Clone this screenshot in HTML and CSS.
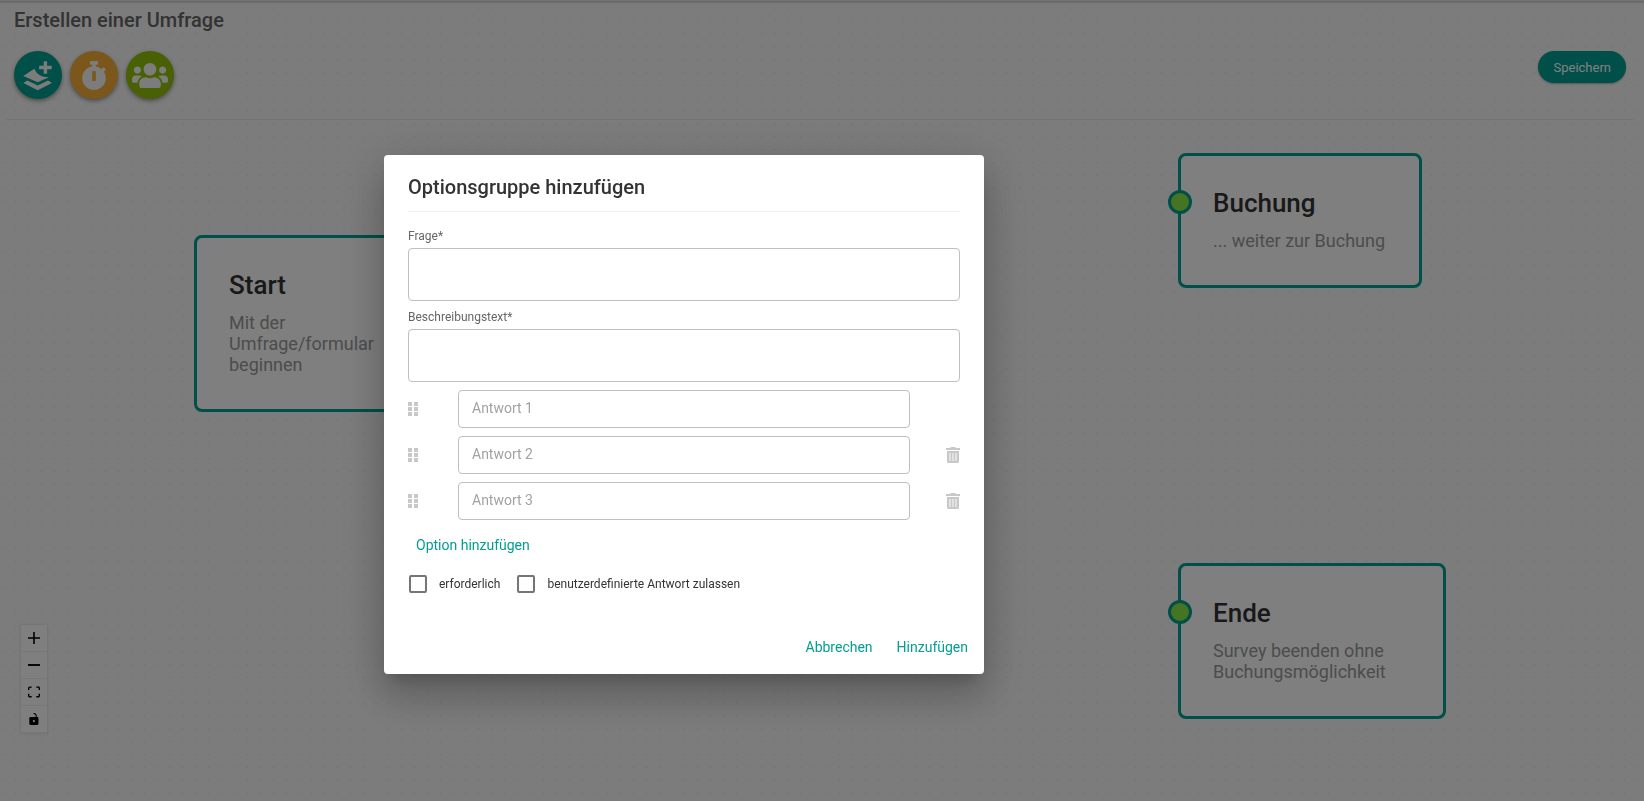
FILE: index.html
```html
<!DOCTYPE html>
<html lang="de">
<head>
<meta charset="utf-8">
<title>Erstellen einer Umfrage</title>
<link rel="stylesheet" href="styles.css">
</head>
<body>
<div class="page">
  <svg class="grid" aria-hidden="true">
    <defs>
      <pattern id="dots" x="9.3" y="0.7" width="12.87" height="12.87" patternUnits="userSpaceOnUse">
        <circle cx="6.4" cy="6.4" r="0.7" fill="#e2e2e2"/>
      </pattern>
    </defs>
    <rect width="100%" height="100%" fill="url(#dots)"/>
  </svg>

  <header class="header">
    <h1 class="header-title">Erstellen einer Umfrage</h1>
    <div class="toolbar">
      <div class="tools">
        <button class="tool tool-teal" type="button" aria-label="Optionsgruppe">
          <svg width="32" height="32" viewBox="0 0 32 32" fill="currentColor">
            <path d="M21.700 2.300h3.400v4.500h4.600v3.400h-4.600v4.600h-3.400v-4.600h-4.600V6.800h4.600z"/>
            <path d="M1.300 17L12.300 9.700C15 15.500 19 18 27 18.200L15.700 23.200z"/>
            <path d="M1.300 24L5.300 21.600L15.700 26.400L26 21.600L30 24L15.700 31.200z"/>
          </svg>
        </button>
        <button class="tool tool-orange" type="button" aria-label="Zeit">
          <svg width="26" height="29" viewBox="0 0 448 512" fill="currentColor"><path d="M432 304c0 114.900-93.100 208-208 208S16 418.900 16 304c0-104 76.300-190.200 176-205.500V64h-28c-6.600 0-12-5.400-12-12V12c0-6.600 5.400-12 12-12h120c6.600 0 12 5.400 12 12v40c0 6.600-5.400 12-12 12h-28v34.500c37.500 5.800 71.700 21.600 99.700 44.600l27.500-27.500c4.700-4.700 12.300-4.700 17 0l28.300 28.300c4.700 4.700 4.700 12.300 0 17l-30 30C419.700 223.300 432 262.200 432 304zm-176 36V188.500c0-6.600-5.400-12-12-12h-40c-6.600 0-12 5.400-12 12V340c0 6.600 5.400 12 12 12h40c6.600 0 12-5.400 12-12z"/></svg>
        </button>
        <button class="tool tool-green" type="button" aria-label="Personen">
          <svg width="36" height="29" viewBox="0 0 640 512" fill="currentColor"><path d="M96 224c35.300 0 64-28.700 64-64s-28.700-64-64-64-64 28.700-64 64 28.700 64 64 64zm448 0c35.300 0 64-28.700 64-64s-28.700-64-64-64-64 28.700-64 64 28.700 64 64 64zm32 32h-64c-17.600 0-33.500 7.100-45.100 18.600 40.300 22.100 68.900 62 75.100 109.400h66c17.700 0 32-14.300 32-32v-32c0-35.300-28.700-64-64-64zm-256 0c61.900 0 112-50.100 112-112S381.900 32 320 32 208 82.100 208 144s50.100 112 112 112zm76.800 32h-8.300c-20.800 10-43.900 16-68.500 16s-47.600-6-68.500-16h-8.300C179.600 288 128 339.600 128 403.200V432c0 26.500 21.500 48 48 48h288c26.500 0 48-21.500 48-48v-28.800c0-63.600-51.600-115.200-115.200-115.200zm-223.700-13.400C161.500 263.100 145.600 256 128 256H64c-35.300 0-64 28.700-64 64v32c0 17.700 14.300 32 32 32h65.900c6.300-47.400 34.900-87.300 75.200-109.400z"/></svg>
        </button>
      </div>
      <button class="save" type="button">Speichern</button>
    </div>
  </header>

  <main class="canvas">
    <article class="node node-start">
      <h2 class="node-title">Start</h2>
      <p class="node-text">Mit der Umfrage/formular beginnen</p>
    </article>
    <article class="node node-booking">
      <span class="handle"></span>
      <h2 class="node-title">Buchung</h2>
      <p class="node-text">... weiter zur Buchung</p>
    </article>
    <article class="node node-end">
      <span class="handle"></span>
      <h2 class="node-title">Ende</h2>
      <p class="node-text">Survey beenden ohne Buchungsmöglichkeit</p>
    </article>
    <div class="controls">
      <button class="control" type="button" aria-label="Vergrößern"><svg width="12" height="12" viewBox="0 0 32 32"><path d="M32 18.133H18.133V32h-4.266V18.133H0v-4.266h13.867V0h4.266v13.867H32z"/></svg></button>
      <button class="control" type="button" aria-label="Verkleinern"><svg width="12" height="12" viewBox="0 0 32 32"><path d="M0 13.500h32v5H0z"/></svg></button>
      <button class="control" type="button" aria-label="Einpassen"><svg width="12" height="12" viewBox="0 0 32 30"><path d="M3.692 4.630c0-.530.400-.938.939-.938h5.215V0H4.708C2.130 0 0 2.054 0 4.630v5.216h3.692V4.631zM27.354 0h-5.200v3.692h5.170c.530 0 .984.400.984.939v5.215H32V4.631A4.624 4.624 0 0027.354 0zm.954 24.830c0 .532-.400.940-.939.940h-5.215v3.768h5.215c2.577 0 4.631-2.130 4.631-4.707v-5.139h-3.692v5.139zm-23.677.940c-.531 0-.939-.400-.939-.940v-5.138H0v5.139c0 2.577 2.130 4.707 4.708 4.707h5.138V25.770H4.631z"/></svg></button>
      <button class="control" type="button" aria-label="Sperren"><svg width="10" height="12" viewBox="0 0 25 32"><path d="M21.333 10.667H19.810V7.619C19.810 3.429 16.380 0 12.190 0c-4.114 1.828-1.370 2.133.305 2.438 1.676.305 4.420 2.590 4.420 5.181v3.048H3.047A3.056 3.056 0 000 13.714v15.238A3.056 3.056 0 003.048 32h18.285a3.056 3.056 0 003.048-3.048V13.714a3.056 3.056 0 00-3.048-3.047zM12.190 24.533a3.056 3.056 0 01-3.047-3.047 3.056 3.056 0 013.047-3.048 3.056 3.056 0 013.048 3.048 3.056 3.056 0 01-3.048 3.047z"/></svg></button>
    </div>
  </main>
</div>

<div class="backdrop">
  <form class="dialog" role="dialog" aria-labelledby="dialog-title">
    <h2 class="dialog-title" id="dialog-title">Optionsgruppe hinzufügen</h2>
    <div class="field">
      <label class="field-label" for="question">Frage*</label>
      <textarea class="box area" id="question"></textarea>
    </div>
    <div class="field">
      <label class="field-label" for="description">Beschreibungstext*</label>
      <textarea class="box area" id="description"></textarea>
    </div>
    <div class="answers">
      <div class="answer">
        <svg class="grip" width="10" height="14" viewBox="0 0 10 14"><path d="M0 0h4v4H0zM6 0h4v4H6zM0 5h4v4H0zM6 5h4v4H6zM0 10h4v4H0zM6 10h4v4H6z"/></svg>
        <input class="box" type="text" placeholder="Antwort 1" aria-label="Antwort 1">
      </div>
      <div class="answer">
        <svg class="grip" width="10" height="14" viewBox="0 0 10 14"><path d="M0 0h4v4H0zM6 0h4v4H6zM0 5h4v4H0zM6 5h4v4H6zM0 10h4v4H0zM6 10h4v4H6z"/></svg>
        <input class="box" type="text" placeholder="Antwort 2" aria-label="Antwort 2">
        <button class="remove" type="button" aria-label="Antwort 2 löschen"><svg width="14" height="16" viewBox="0 0 14 16"><path fill="#c8c8c8" d="M0 1h4l1-1h4l1 1h4v2H0zM1 4h12v11l-1 1H2l-1-1z"/><path fill="#e2e2e2" d="M3 6h2v8H3zM6 6h2v8H6zM9 6h2v8H9z"/></svg></button>
      </div>
      <div class="answer">
        <svg class="grip" width="10" height="14" viewBox="0 0 10 14"><path d="M0 0h4v4H0zM6 0h4v4H6zM0 5h4v4H0zM6 5h4v4H6zM0 10h4v4H0zM6 10h4v4H6z"/></svg>
        <input class="box" type="text" placeholder="Antwort 3" aria-label="Antwort 3">
        <button class="remove" type="button" aria-label="Antwort 3 löschen"><svg width="14" height="16" viewBox="0 0 14 16"><path fill="#c8c8c8" d="M0 1h4l1-1h4l1 1h4v2H0zM1 4h12v11l-1 1H2l-1-1z"/><path fill="#e2e2e2" d="M3 6h2v8H3zM6 6h2v8H6zM9 6h2v8H9z"/></svg></button>
      </div>
    </div>
    <button class="link add" type="button">Option hinzufügen</button>
    <div class="checks">
      <label class="check"><input class="tick" type="checkbox">erforderlich</label>
      <label class="check"><input class="tick" type="checkbox">benutzerdefinierte Antwort zulassen</label>
    </div>
    <div class="actions">
      <button class="link" type="button">Abbrechen</button>
      <button class="link" type="submit">Hinzufügen</button>
    </div>
  </form>
</div>
</body>
</html>
```
FILE: styles.css
```css
* {
  box-sizing: border-box;
}

body {
  margin: 0;
  font-family: Roboto, "Liberation Sans", sans-serif;
  color: #333;
}

h1, h2, p {
  margin: 0;
}

button, input, textarea {
  font: inherit;
}

button {
  border: 0;
  padding: 0;
  background: none;
  cursor: pointer;
}

svg {
  display: block;
}

.page {
  position: relative;
  display: flex;
  flex-direction: column;
  min-height: 100vh;
  overflow: hidden;
  background: linear-gradient(#c8c8c8, #f8f8f8 3px);
  border-top: 1px solid #e8e8e8;
}

.grid {
  position: absolute;
  inset: 0;
  width: 100%;
  height: 100%;
}

.header {
  position: relative;
  margin: 0 10px 0 6px;
  padding: 7px 8px 20px;
  border-bottom: 1px solid #ebebeb;
}

.header-title {
  font-size: 20px;
  line-height: 24px;
  font-weight: 500;
  color: #666;
}

.toolbar {
  display: flex;
  justify-content: space-between;
  align-items: flex-start;
  margin-top: 19px;
}

.tools {
  display: flex;
  gap: 8px;
}

.tool {
  display: grid;
  place-items: center;
  width: 48px;
  height: 48px;
  border-radius: 50%;
  color: #f8f8f8;
  box-shadow: 0 2px 4px rgba(0, 0, 0, 0.4);
}

.tool-teal {
  background: #009f92;
}

.tool-orange {
  background: #f8ae36;
}

.tool-green {
  background: #94c108;
}

.save {
  padding: 9px 15px 7px;
  border-radius: 16px;
  font-size: 13px;
  line-height: 16px;
  color: #fff;
  background: #009f92;
  box-shadow: 0 1px 2px rgba(0, 0, 0, 0.3);
}

.canvas {
  position: relative;
  flex: 1;
}

/* Survey nodes on the free canvas */
.node {
  position: absolute;
  padding: 32px 34px 34px 32px;
  border: 3px solid #009f92;
  border-radius: 8px;
  background: #fff;
}

.node-start {
  left: 194px;
  top: 115px;
  width: 245px;
}

.node-booking {
  left: 1178px;
  top: 33px;
}

.node-end {
  left: 1178px;
  top: 443px;
  width: 268px;
}

.node-title {
  font-size: 26px;
  line-height: 30px;
  font-weight: 500;
  color: #333;
}

.node-text {
  margin-top: 12px;
  font-size: 18px;
  line-height: 21px;
  color: #999;
}

.handle {
  position: absolute;
  left: -13px;
  top: 34px;
  width: 24px;
  height: 24px;
  border: 3px solid #009f92;
  border-radius: 50%;
  background: #8be846;
}

.controls {
  position: absolute;
  left: 21px;
  bottom: 68px;
  display: flex;
  flex-direction: column;
  box-shadow: 0 0 2px 1px rgba(0, 0, 0, 0.08);
}

.control {
  display: grid;
  place-items: center;
  width: 26px;
  height: 27px;
  border-bottom: 1px solid #eee;
  background: #fefefe;
}

.backdrop {
  position: fixed;
  inset: 0;
  display: flex;
  align-items: center;
  justify-content: center;
  padding: 28px 276px 0 0;
  background: rgba(0, 0, 0, 0.5);
}

.dialog {
  display: flex;
  flex-direction: column;
  width: 600px;
  padding: 20px 24px 17px;
  border-radius: 4px;
  background: #fff;
  box-shadow: 0 11px 15px -7px rgba(0, 0, 0, 0.2), 0 24px 38px 3px rgba(0, 0, 0, 0.14), 0 9px 46px 8px rgba(0, 0, 0, 0.12);
}

.dialog-title {
  margin-bottom: 16px;
  padding-bottom: 12px;
  border-bottom: 1px solid #eee;
  font-size: 20px;
  line-height: 24px;
  font-weight: 500;
}

.field {
  display: flex;
  flex-direction: column;
  gap: 4px;
  margin-bottom: 8px;
}

.field-label {
  font-size: 12px;
  line-height: 16px;
  color: #666;
}

.box {
  flex: 1;
  min-width: 0;
  height: 38px;
  padding: 0 13px 2px;
  border: 1px solid #bfbfbf;
  border-radius: 4px;
  background: #fff;
  font-size: 14px;
}

.box::placeholder {
  color: #a2a2a2;
}

.area {
  flex: none;
  height: 53px;
  padding: 8px 13px;
  resize: none;
}

.answers {
  display: flex;
  flex-direction: column;
  gap: 8px;
}

.answer {
  display: grid;
  grid-template-columns: 50px 1fr 50px;
  align-items: center;
}

.grip {
  fill: #c8c8c8;
}

.remove {
  justify-self: end;
}

.link {
  font-size: 14px;
  line-height: 20px;
  color: #009f92;
}

.add {
  align-self: flex-start;
  margin: 15px 8px 20px;
}

.checks {
  display: flex;
  gap: 16px;
}

.check {
  display: flex;
  align-items: center;
  gap: 12px;
  font-size: 12px;
  line-height: 18px;
}

.tick {
  appearance: none;
  width: 18px;
  height: 18px;
  margin: 0 0 0 1px;
  border: 2px solid #757575;
  border-radius: 2px;
}

.actions {
  display: flex;
  justify-content: flex-end;
  gap: 24px;
  margin: 44px -8px 0 0;
}
```
